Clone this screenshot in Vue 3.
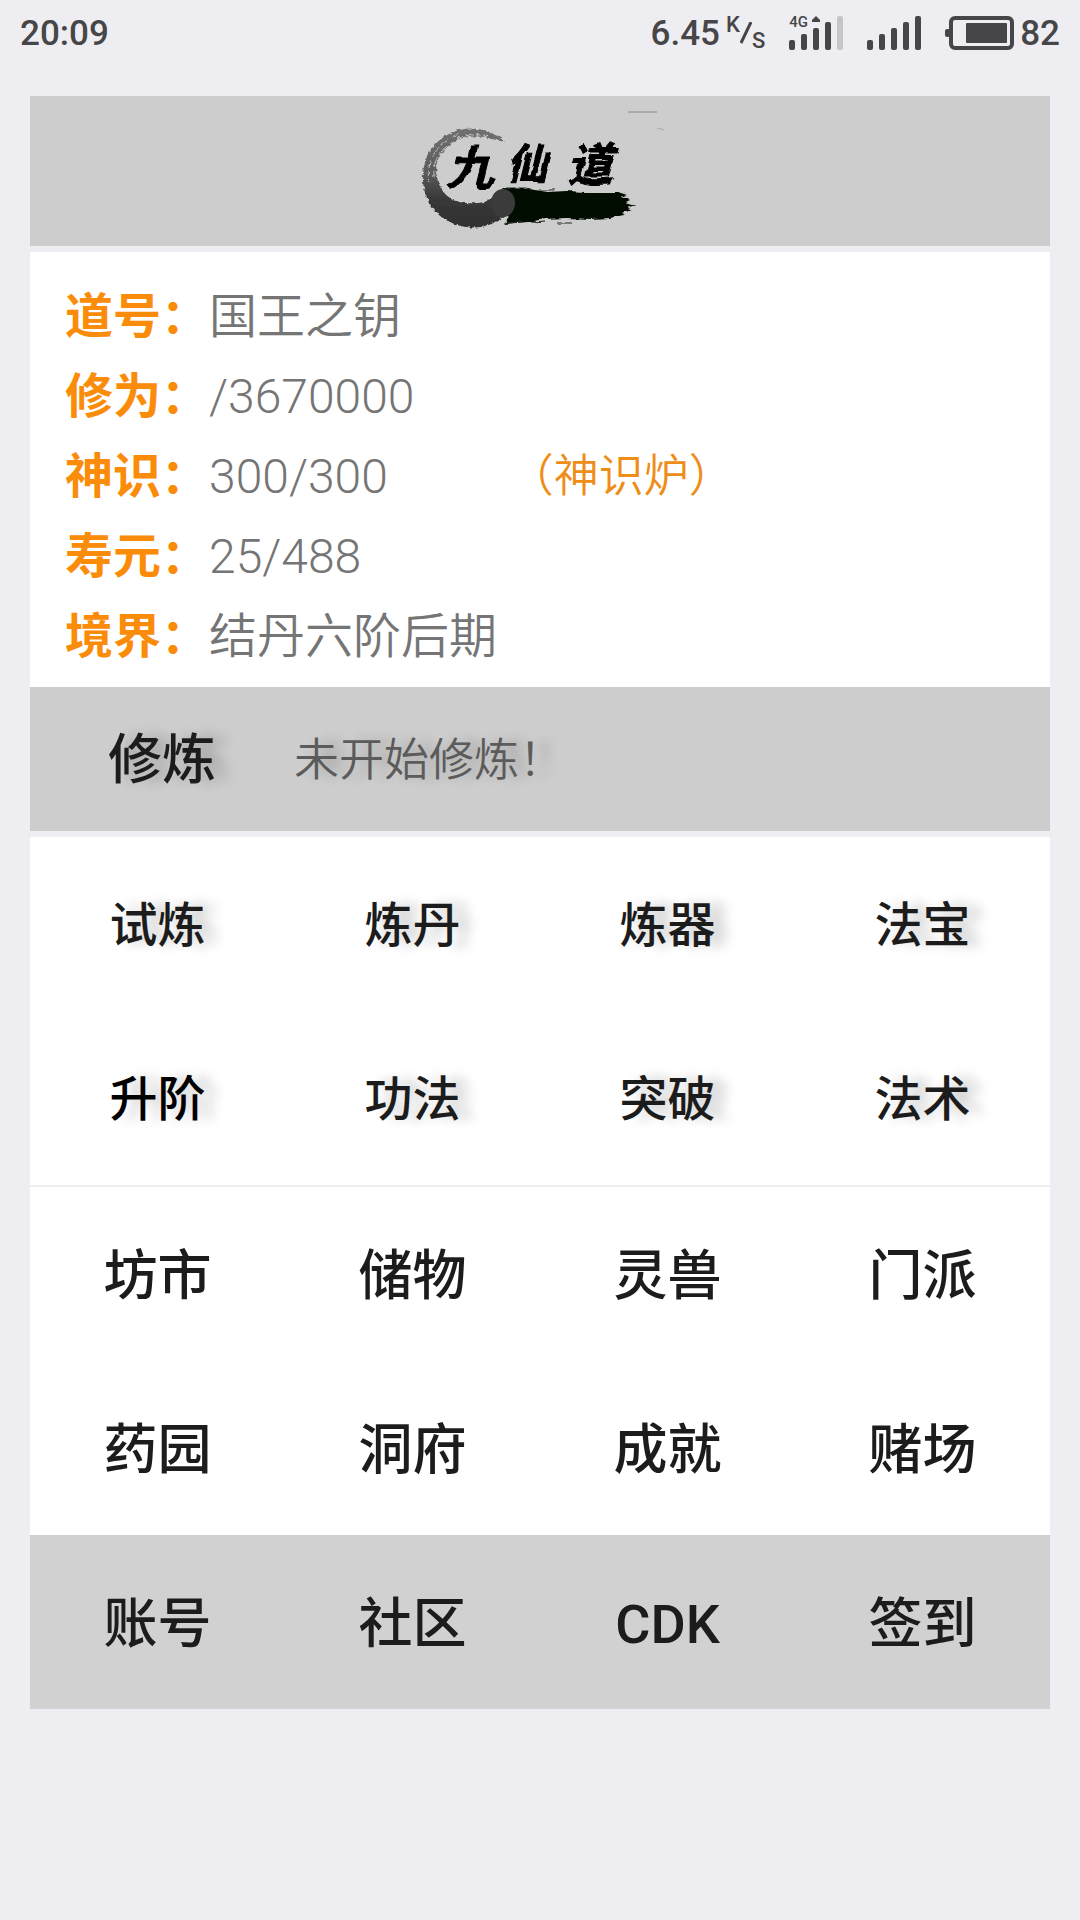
<template>
  <div class="page">
    <header class="status-bar">
      <span class="status-text">20:09</span>
      <div class="status-right">
        <span class="status-text">6.45</span>
        <span class="speed-unit"><sup>K</sup><svg width="12" height="22" viewBox="0 0 12 22" aria-hidden="true"><path d="M11 0L1 21" stroke="#464648" stroke-width="3" /></svg><sub>S</sub></span>
        <span class="signal">
          <span class="network">4G<svg width="8" height="6" viewBox="0 0 8 6" aria-hidden="true"><path d="M4 0L8 4V6H0V4Z" fill="#464648" /></svg></span>
          <svg width="54" height="34" viewBox="0 0 54 34" aria-hidden="true">
            <rect
              v-for="(height, i) in bars"
              :key="height"
              :x="i * 12"
              :y="34 - height"
              width="6"
              :height="height"
              rx="2"
              :fill="i === 4 ? '#c5c5ca' : '#464648'"
            />
          </svg>
        </span>
        <svg class="signal-full" width="54" height="34" viewBox="0 0 54 34" aria-hidden="true">
          <rect
            v-for="(height, i) in bars"
            :key="height"
            :x="i * 12"
            :y="34 - height"
            width="6"
            :height="height"
            rx="2"
            fill="#464648"
          />
        </svg>
        <svg class="battery" width="69" height="34" viewBox="0 0 69 34" aria-hidden="true">
          <rect x="6" y="2" width="61" height="30" rx="4" fill="none" stroke="#464648" stroke-width="4" />
          <rect x="0" y="13" width="5" height="8" rx="2" fill="#464648" />
          <rect x="21" y="7" width="41" height="20" rx="1" fill="#464648" />
        </svg>
        <span class="status-text">82</span>
      </div>
    </header>

    <main class="content">
      <div class="banner">
        <svg class="logo" width="280" height="150" viewBox="0 1 280 150" role="img" aria-label="九仙道">
          <defs>
            <filter id="rough" x="-5%" y="-20%" width="110%" height="140%">
              <feTurbulence type="fractalNoise" baseFrequency="0.08 0.3" numOctaves="2" seed="4" />
              <feDisplacementMap in="SourceGraphic" scale="5" xChannelSelector="R" yChannelSelector="G" />
            </filter>
            <filter id="ink" x="-5%" y="-5%" width="110%" height="110%">
              <feTurbulence type="fractalNoise" baseFrequency="0.3" numOctaves="2" seed="7" />
              <feDisplacementMap in="SourceGraphic" scale="4" xChannelSelector="R" yChannelSelector="G" />
            </filter>
            <filter id="brush" x="-5%" y="-5%" width="110%" height="110%">
              <feTurbulence type="fractalNoise" baseFrequency="0.09" numOctaves="1" seed="3" />
              <feDisplacementMap in="SourceGraphic" scale="6" xChannelSelector="R" yChannelSelector="G" />
            </filter>
            <linearGradient id="wash" x1="0" y1="0" x2="0" y2="1">
              <stop offset="0" stop-color="#707070" />
              <stop offset="0.45" stop-color="#5c5c5c" />
              <stop offset="0.7" stop-color="#393939" />
              <stop offset="1" stop-color="#303030" />
            </linearGradient>
          </defs>
          <path
            d="M104 46C88 32 66 30 49 39C30 49 22 65 23 87C25 111 42 129 67 132C81 134 93 130 105 121L115 106L106 93C96 99 91 108 76 108C58 110 44 103 39 89C34 75 36 62 45 54C56 43 69 40 83 42C92 43 99 47 104 46Z"
            fill="url(#wash)"
            filter="url(#ink)"
          />
          <g fill="none" stroke="#bdbdbd" stroke-width="1" filter="url(#ink)">
            <path d="M29 88C25 65 39 46 59 39" stroke-dasharray="13 2 8 4" />
            <path d="M34 82C32 63 43 49 64 43" stroke-dasharray="7 3 15 4" />
            <path d="M58 43C68 39 76 39 87 41" stroke-width="2" stroke-dasharray="4 4 7 3" />
          </g>
          <path
            d="M103 93L128 94L148 97L166 96L184 97L218 97L227 100L222 102L230 105L226 107L236 110L228 113L232 115L221 118L225 120L210 123L191 124L166 123L145 124L128 127L105 129L109 118Z"
            fill="#030d03"
            filter="url(#rough)"
          />
          <path d="M106 93H126L139 95H155M104 128L122 127M132 128L145 127M158 128H172" stroke="#252825" stroke-width="1" fill="none" filter="url(#rough)" />
          <ellipse cx="103" cy="108" rx="12" ry="14" fill="#3b3b3b" />
          <path d="M228 17H257" stroke="#8b887e" stroke-width="1" />
          <path d="M257 33L261 34L264 35" stroke="#aaa" stroke-width="1" fill="none" />
          <g class="logo-text" filter="url(#brush)">
            <text x="46" y="91" font-size="48">九</text>
            <text x="106" y="84" font-size="42">仙</text>
            <text x="167" y="86" font-size="46">道</text>
          </g>
        </svg>
      </div>

      <dl class="profile">
        <div v-for="item in profile" :key="item.label" class="profile-row">
          <dt>{{ item.label }}：</dt>
          <dd>
            {{ item.value }}
            <a v-if="item.link" href="#" class="profile-link">{{ item.link }}</a>
          </dd>
        </div>
      </dl>

      <section class="practice">
        <button type="button" class="practice-button shadow">修炼</button>
        <span class="practice-status shadow">未开始修炼！</span>
      </section>

      <nav class="menu menu-small">
        <button
          v-for="name in skills"
          :key="name"
          type="button"
          class="menu-item shadow"
          :class="{ available: name === '升阶' }"
        >{{ name }}</button>
      </nav>
      <nav class="menu menu-places">
        <button v-for="name in places" :key="name" type="button" class="menu-item">{{ name }}</button>
      </nav>
      <nav class="menu menu-footer">
        <button v-for="name in footer" :key="name" type="button" class="menu-item">{{ name }}</button>
      </nav>
    </main>
  </div>
</template>

<script setup>
const bars = [10, 16, 22, 28, 34]

const profile = [
  { label: '道号', value: '国王之钥' },
  { label: '修为', value: '/3670000' },
  { label: '神识', value: '300/300', link: '（神识炉）' },
  { label: '寿元', value: '25/488' },
  { label: '境界', value: '结丹六阶后期' }
]

const skills = ['试炼', '炼丹', '炼器', '法宝', '升阶', '功法', '突破', '法术']
const places = ['坊市', '储物', '灵兽', '门派', '药园', '洞府', '成就', '赌场']
const footer = ['账号', '社区', 'CDK', '签到']
</script>

<style>
body {
  margin: 0;
  background: #eeedf2;
}
</style>

<style scoped>
.page {
  min-height: 100vh;
  background: #eeedf2;
  color: #1c1c1c;
  font-family: Roboto, "Noto Sans CJK SC", sans-serif;
}

button {
  padding: 0;
  border: none;
  background: none;
  color: inherit;
  font-family: inherit;
  cursor: pointer;
}

/* Status bar */
.status-bar {
  display: flex;
  align-items: center;
  justify-content: space-between;
  height: 66px;
  margin-bottom: 30px;
  padding: 0 20px;
  box-sizing: border-box;
  color: #464648;
  font-weight: 500;
}

.status-right {
  display: flex;
  align-items: center;
}

.status-text {
  padding-top: 2px;
  font-size: 35px;
  line-height: 64px;
}

.speed-unit {
  display: flex;
  align-items: center;
  margin: 0 24px 0 6px;
  font-size: 22px;
  line-height: 20px;
}

.speed-unit sup {
  align-self: flex-start;
  font-size: inherit;
  line-height: inherit;
}

.speed-unit sub {
  align-self: flex-end;
  padding-top: 16px;
  font-size: inherit;
  line-height: inherit;
}

.signal {
  position: relative;
  display: flex;
}

.network {
  position: absolute;
  top: 0;
  left: 0;
  display: flex;
  gap: 4px;
  font-size: 15px;
  line-height: 12px;
}

.signal-full {
  margin-left: 24px;
}

.battery {
  margin: 0 6px 0 24px;
}

/* Content */
.content {
  padding: 0 30px;
}

.banner {
  display: flex;
  justify-content: center;
  margin-bottom: 6px;
  background: #cdcdcd;
}

.logo-text {
  fill: #000;
  stroke: #000;
  stroke-width: 1;
  font-style: italic;
  font-weight: 700;
}

.profile {
  margin: 0;
  padding: 25px 35px 10px;
  background: #fff;
}

.profile-row {
  display: flex;
  font-size: 48px;
  line-height: 80px;
}

.profile-row dt {
  color: #fb8c0a;
  font-weight: 700;
}

.profile-row dd {
  display: flex;
  gap: 121px;
  margin: 0;
  color: #757575;
  font-weight: 350;
}

.profile-link {
  color: #ee8d17;
  font-size: 45px;
  text-decoration: none;
}

.practice {
  display: grid;
  grid-template-columns: repeat(4, 1fr);
  align-items: center;
  margin-bottom: 6px;
  padding-top: 4px;
  background: #cdcdcd;
  line-height: 140px;
}

.practice-button {
  padding-left: 9px;
  font-size: 54px;
  font-weight: 500;
  line-height: inherit;
}

.practice-status {
  grid-column: span 3;
  padding-left: 9px;
  color: #5b5b5b;
  font-size: 45px;
  font-weight: 350;
}

.shadow {
  text-shadow: 14px 0 12px rgba(0, 0, 0, 0.2);
}

/* Menus */
.menu {
  display: grid;
  grid-template-columns: repeat(4, 1fr);
  background: #fff;
}

.menu-item {
  padding-top: 6px;
  font-size: 54px;
  font-weight: 500;
  line-height: 168px;
}

.menu-small .menu-item {
  padding-top: 4px;
  font-size: 48px;
  line-height: 170px;
}

.menu-item.available {
  color: #000;
}

.menu-places {
  border-top: 2px solid #eee;
}

.menu-footer {
  background: #d1d1d1;
}
</style>
